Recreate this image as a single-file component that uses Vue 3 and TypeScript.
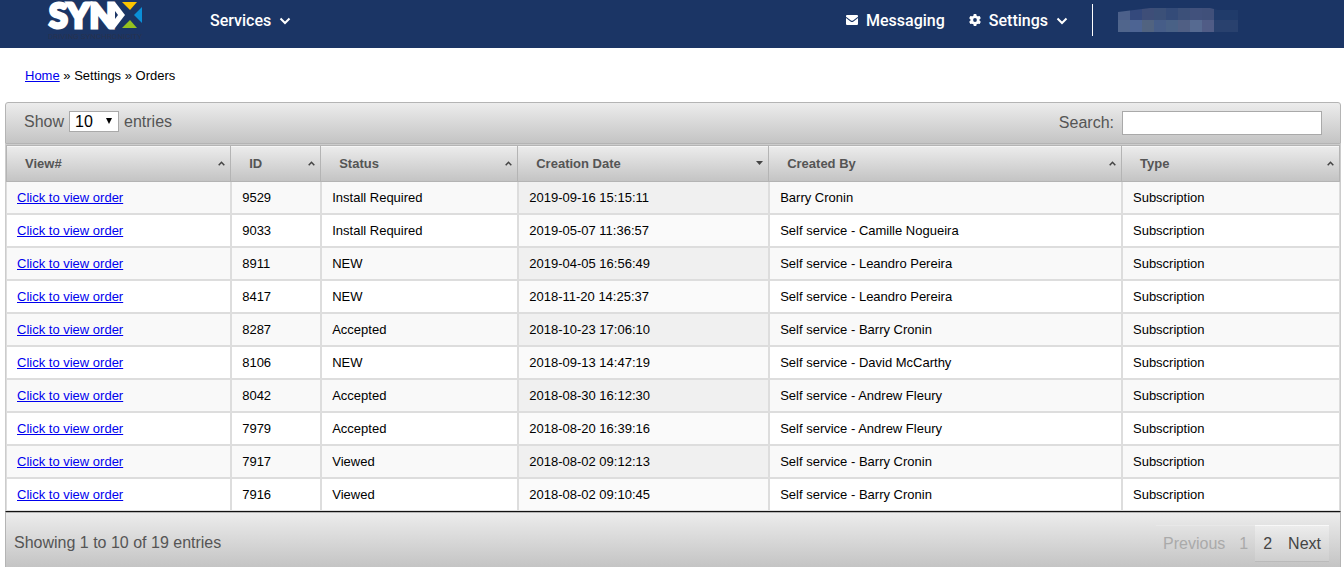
<script setup lang="ts">
import { ref } from 'vue'

interface Column {
  label: string
  width: string
  sorted?: boolean
}

interface Order {
  id: number
  status: string
  created: string
  by: string
}

const columns: Column[] = [
  { label: 'View#', width: '16.88%' },
  { label: 'ID', width: '6.75%' },
  { label: 'Status', width: '14.77%' },
  { label: 'Creation Date', width: '18.81%', sorted: true },
  { label: 'Created By', width: '26.45%' },
  { label: 'Type', width: '16.34%' },
]

const orders: Order[] = [
  { id: 9529, status: 'Install Required', created: '2019-09-16 15:15:11', by: 'Barry Cronin' },
  { id: 9033, status: 'Install Required', created: '2019-05-07 11:36:57', by: 'Self service - Camille Nogueira' },
  { id: 8911, status: 'NEW', created: '2019-04-05 16:56:49', by: 'Self service - Leandro Pereira' },
  { id: 8417, status: 'NEW', created: '2018-11-20 14:25:37', by: 'Self service - Leandro Pereira' },
  { id: 8287, status: 'Accepted', created: '2018-10-23 17:06:10', by: 'Self service - Barry Cronin' },
  { id: 8106, status: 'NEW', created: '2018-09-13 14:47:19', by: 'Self service - David McCarthy' },
  { id: 8042, status: 'Accepted', created: '2018-08-30 16:12:30', by: 'Self service - Andrew Fleury' },
  { id: 7979, status: 'Accepted', created: '2018-08-20 16:39:16', by: 'Self service - Andrew Fleury' },
  { id: 7917, status: 'Viewed', created: '2018-08-02 09:12:13', by: 'Self service - Barry Cronin' },
  { id: 7916, status: 'Viewed', created: '2018-08-02 09:10:45', by: 'Self service - Barry Cronin' },
]

const mosaicTop = ['#4c608a', '#34497c', '#3e4e78', '#3b5078', '#344b78', '#3c5079', '#41517c', '#40507a']
const mosaicBottom = ['#50658c', '#4d6493', '#516380', '#465d88', '#496186', '#505f84', '#566a91', '#505c86']

const pageSize = ref('10')
const search = ref('')
</script>

<template>
  <header class="topbar">
    <a class="logo" href="#" aria-label="SYNX">
      <svg width="96" height="42" viewBox="0 0 96 42">
        <text x="1" y="28" class="logo-name">SYN</text>
        <path d="M65 2H67L77 15L67 28H65Z" fill="#fff" />
        <path d="M67 11 L70 15 L67 19Z" fill="#1b3565" />
        <path d="M74 2H89L82 10Z" fill="#fdc400" />
        <path d="M94 7V23L86 15Z" fill="#0b8fd8" />
        <path d="M74 28H89L82 20Z" fill="#95c11f" />
        <text x="0" y="39" class="logo-tag">DRIVING SYNCHRONICITY</text>
      </svg>
    </a>
    <nav class="nav">
      <button type="button" class="nav-item">
        <span>Services</span>
        <svg class="chevron" width="12" height="8" viewBox="0 0 12 8"><path d="M1.500 1.500L6 6L10.500 1.500" /></svg>
      </button>
      <a class="nav-item messaging" href="#">
        <svg width="12" height="10" viewBox="0 0 12 10" fill="#fff">
          <path d="M1 0H11Q12 0 12 1V1.700L7 5.500Q6 6.200 5 5.500L0 1.700V1Q0 0 1 0Z" />
          <path d="M0 3L4.500 6.400Q6 7.400 7.500 6.400L12 3V9Q12 10 11 10H1Q0 10 0 9Z" />
        </svg>
        <span>Messaging</span>
      </a>
      <button type="button" class="nav-item settings">
        <svg width="12" height="12" viewBox="0 0 12 12">
          <g fill="#fff">
            <rect x="4.500" y="0" width="3" height="12" rx="0.700" />
            <rect x="4.500" y="0" width="3" height="12" rx="0.700" transform="rotate(60 6 6)" />
            <rect x="4.500" y="0" width="3" height="12" rx="0.700" transform="rotate(120 6 6)" />
            <circle cx="6" cy="6" r="4.600" />
          </g>
          <circle cx="6" cy="6" r="1.900" fill="#1b3565" />
        </svg>
        <span>Settings</span>
        <svg class="chevron" width="12" height="8" viewBox="0 0 12 8"><path d="M1.500 1.500L6 6L10.500 1.500" /></svg>
      </button>
      <span class="divider"></span>
      <svg class="account" width="120" height="24" viewBox="0 0 120 24" aria-hidden="true">
        <clipPath id="mosaic"><path d="M0 4L32 0H92L100 2H120V24H0Z" /></clipPath>
        <g clip-path="url(#mosaic)">
          <rect x="96" width="24" height="12" fill="#203b6a" />
          <rect x="96" y="12" width="24" height="12" fill="#29416e" />
          <rect v-for="(c, i) in mosaicTop" :key="'t' + i" :x="i * 12" width="12" height="12" :fill="c" />
          <rect v-for="(c, i) in mosaicBottom" :key="'b' + i" :x="i * 12" y="12" width="12" height="12" :fill="c" />
        </g>
      </svg>
    </nav>
  </header>

  <main>
    <nav class="crumbs" aria-label="Breadcrumb"><a href="#">Home</a> » Settings » Orders</nav>

    <section class="grid">
      <div class="toolbar">
        <label class="length">
          Show
          <span class="select-wrap">
            <select v-model="pageSize">
              <option>10</option>
              <option>25</option>
              <option>50</option>
              <option>100</option>
            </select>
            <svg width="6" height="6" viewBox="0 0 6 6"><path d="M0 0H6L3 6Z" /></svg>
          </span>
          entries
        </label>
        <label class="search">Search: <input v-model="search" type="text" /></label>
      </div>

      <table>
        <colgroup>
          <col v-for="c in columns" :key="c.label" :style="{ width: c.width }" />
        </colgroup>
        <thead>
          <tr>
            <th v-for="c in columns" :key="c.label" scope="col" :aria-sort="c.sorted ? 'descending' : undefined">
              <button type="button" class="sort">
                <span>{{ c.label }}</span>
                <svg v-if="c.sorted" width="7" height="4" viewBox="0 0 7 4"><path d="M0 0H7L3.500 4Z" fill="#444" /></svg>
                <svg v-else width="7" height="5" viewBox="0 0 7 5">
                  <path d="M0.700 4.300L3.500 1.300L6.300 4.300" fill="none" stroke="#444" stroke-width="1.500" />
                </svg>
              </button>
            </th>
          </tr>
        </thead>
        <tbody>
          <tr v-for="o in orders" :key="o.id">
            <td><a href="#">Click to view order</a></td>
            <td>{{ o.id }}</td>
            <td>{{ o.status }}</td>
            <td class="sorted">{{ o.created }}</td>
            <td>{{ o.by }}</td>
            <td>Subscription</td>
          </tr>
        </tbody>
      </table>

      <div class="footer">
        <span>Showing 1 to 10 of 19 entries</span>
        <div class="pager">
          <button type="button" disabled>Previous</button>
          <button type="button" disabled>1</button>
          <button type="button">2</button>
          <button type="button">Next</button>
        </div>
      </div>
    </section>
  </main>
</template>

<style>
body {
  margin: 0;
  background: #fff;
  color: #000;
  font-family: "Liberation Sans", Arial, sans-serif;
  font-size: 13px;
}
</style>

<style scoped>
* {
  box-sizing: border-box;
}
button {
  margin: 0;
  border: 0;
  background: none;
  font: inherit;
  color: inherit;
  cursor: pointer;
}
a {
  color: #00e;
}
.topbar {
  display: flex;
  height: 48px;
  padding-left: 48px;
  background: #1b3565;
}
.logo {
  width: 96px;
  height: 42px;
}
.logo svg {
  display: block;
  overflow: visible;
}
.logo-name {
  font: 900 34px Lato, sans-serif;
  fill: #fff;
  stroke: #fff;
  stroke-width: 3px;
}
.logo-tag {
  font: 8px Roboto, sans-serif;
  fill: #27324f;
}
.nav {
  display: flex;
  flex: 1;
  align-items: center;
  height: 40px;
  padding: 0 106px 0 66px;
  color: #fff;
  font: 500 16px/20px Roboto, sans-serif;
}
.nav-item {
  display: flex;
  align-items: center;
  gap: 8px;
  padding: 0;
  color: #fff;
  text-decoration: none;
}
.nav-item span {
  padding-top: 1px;
}
.chevron {
  margin-top: 2px;
}
.chevron path {
  fill: none;
  stroke: #fff;
  stroke-width: 2;
}
.messaging {
  margin-left: auto;
}
.settings {
  margin-left: 24px;
}
.divider {
  width: 1px;
  height: 32px;
  margin: 0 25px 0 24px;
  background: #fff;
}
.crumbs {
  padding: 20px 25px 19px;
  line-height: 15px;
}
.grid {
  margin: 0 3px 0 5px;
}
.toolbar,
.footer {
  display: flex;
  justify-content: space-between;
  border: 1px solid #b4b4b4;
  background: linear-gradient(#ececec, #c4c4c4);
  color: #555;
  font-size: 16px;
}
.toolbar {
  height: 42px;
  padding: 8px 18px;
  border-radius: 3px 3px 0 0;
}
.length {
  display: flex;
  align-items: center;
  gap: 5px;
  height: 21px;
}
.select-wrap {
  position: relative;
  display: flex;
}
.select-wrap svg {
  position: absolute;
  top: 7px;
  right: 7px;
  pointer-events: none;
}
select {
  width: 50px;
  height: 21px;
  padding: 0 5px;
  border: 1px solid #a9a9a9;
  border-radius: 0;
  background: #fff;
  appearance: none;
  font: 16px "Liberation Sans", Arial, sans-serif;
}
.search {
  display: flex;
  align-items: center;
  gap: 8px;
  height: 24px;
}
input {
  width: 200px;
  height: 24px;
  padding: 2px;
  border: 1px solid #a9a9a9;
  font: inherit;
}
table {
  width: 100%;
  border: solid #ccc;
  border-width: 1px 1px 0;
  border-bottom: 1px solid #111;
  border-spacing: 0;
  table-layout: fixed;
}
th {
  height: 37px;
  padding: 0;
  border: solid #b4b4b4;
  border-width: 1px 1px 1px 0;
  background: linear-gradient(#ececec, #c4c4c4);
  color: #555;
}
th:first-child {
  border-left-width: 1px;
}
.sort {
  display: flex;
  align-items: center;
  justify-content: space-between;
  width: 100%;
  height: 35px;
  padding: 0 5px 2px 18px;
  border-top: 1px solid #f6f6f6;
  font-weight: bold;
}
td {
  height: 33px;
  padding: 0 10px;
  border: solid #ddd;
  border-width: 0 1px 2px;
  line-height: 15px;
}
tbody tr:last-child td {
  height: 32px;
  border-bottom-width: 1px;
}
tbody tr:nth-child(odd) {
  background: #f9f9f9;
}
.sorted {
  background: #fafafa;
}
tr:nth-child(odd) .sorted {
  background: #f0f0f0;
}
.footer {
  height: 55px;
  padding: 12px 11px 4px 8px;
  border-bottom: 0;
  line-height: 36px;
}
.pager {
  display: flex;
}
.pager button {
  height: 37px;
  padding: 0 8px;
  border-top: 1px solid #f8f8f8;
  border-bottom: 1px solid #bbb;
  background: linear-gradient(#ececec, #cfcfcf);
  color: #444;
}
.pager button:disabled {
  padding: 0 7px;
  border-top-color: #e8e8e8;
  border-bottom-color: transparent;
  background: none;
  color: #aaa;
  cursor: default;
}
</style>
